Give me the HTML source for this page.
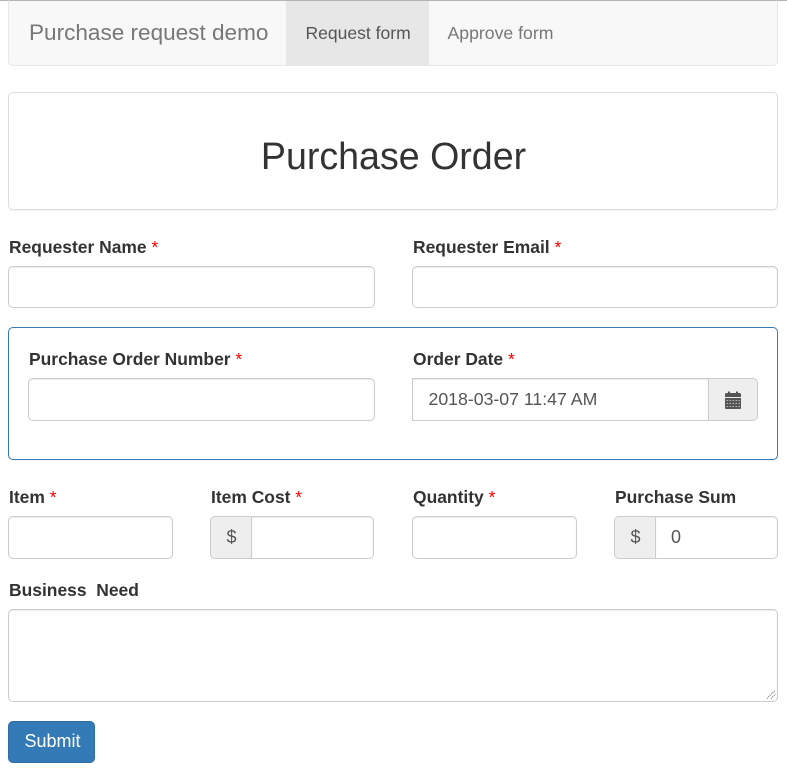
<!DOCTYPE html>
<html>
<head>
<meta charset="utf-8">
<style>
html,body{margin:0;padding:0;background:#fff}
body{position:relative;width:787px;height:769px;overflow:hidden;font-family:"Liberation Sans",Arial,sans-serif;color:#333}
.a{position:absolute;box-sizing:border-box}
.t{position:absolute;white-space:pre;line-height:20px}
.l{font-weight:bold;color:#333;font-size:17.45px}
.l b{color:#f00;font-weight:normal}
.i{position:absolute;box-sizing:border-box;border:1px solid #ccc;border-radius:5px;background:#fff;box-shadow:inset 0 1px 1px rgba(0,0,0,.075)}
.g{position:absolute;box-sizing:border-box;border:1px solid #ccc;background:#eee;color:#555;font-size:18px;text-align:center;border-radius:5px 0 0 5px;line-height:40px;padding-left:1px}
</style>
</head>
<body>
<div class="a" style="left:0;top:0;width:787px;height:1px;background:#b4b4b4"></div>

<div class="a" style="left:8px;top:0;width:770px;height:66px;background:#f8f8f8;border:1px solid #e7e7e7;border-top:1px solid #b4b4b4;border-radius:0 0 5px 5px"></div>
<div class="a" style="left:286px;top:1px;width:143px;height:64px;background:#e7e7e7"></div>
<div class="t" style="left:29px;top:23px;font-size:22.55px;color:#777">Purchase request demo</div>
<div class="t" style="left:305.5px;top:23px;font-size:17.55px;color:#555">Request form</div>
<div class="t" style="left:447.5px;top:23px;font-size:17.65px;color:#777">Approve form</div>

<div class="a" style="left:8px;top:92px;width:770px;height:118px;border:1px solid #ddd;border-radius:5px;box-shadow:0 1px 1px rgba(0,0,0,.05)"></div>
<div class="t" style="left:0;width:787px;text-align:center;top:146px;font-size:37.6px;color:#333">Purchase Order</div>

<div class="t l" style="left:9px;top:237px">Requester Name <b>*</b></div>
<div class="i" style="left:8px;top:266px;width:367px;height:42px"></div>
<div class="t l" style="left:413px;top:237px">Requester Email <b>*</b></div>
<div class="i" style="left:412px;top:266px;width:366px;height:42px"></div>

<div class="a" style="left:8px;top:327px;width:770px;height:133px;border:1px solid #337ab7;border-radius:5px;box-shadow:0 1px 1px rgba(0,0,0,.05)"></div>
<div class="t l" style="left:29px;top:349px">Purchase Order Number <b>*</b></div>
<div class="i" style="left:28px;top:378px;width:347px;height:43px"></div>
<div class="t l" style="left:413px;top:349px">Order Date <b>*</b></div>
<div class="i" style="left:412px;top:378px;width:297px;height:43px;border-radius:0"></div>
<div class="t" style="left:428.5px;top:389px;font-size:17.7px;color:#555">2018-03-07 11:47 AM</div>
<div class="a" style="left:708px;top:378px;width:50px;height:43px;background:#eee;border:1px solid #ccc;border-radius:0 5px 5px 0"></div>
<svg class="a" style="left:724px;top:390px" width="18" height="20" viewBox="0 0 18 20">
<path fill="#555" d="M1 4.500 C1 3.500 1.600 3 2.500 3 H4 V1.500 H6 V3 H12 V1.500 H14 V3 H15.500 C16.400 3 17 3.500 17 4.500 V7 H1 Z"/>
<path fill="#555" d="M1 8 H17 V18 C17 18.600 16.600 19 16 19 H2 C1.400 19 1 18.600 1 18 Z"/>
<path stroke="#bbb" stroke-width="1" stroke-dasharray="1.500 1.500" fill="none" d="M2.500 10.500 H16 M2.500 13.500 H16 M2.500 16.500 H16"/>
</svg>

<div class="t l" style="left:9px;top:487px">Item <b>*</b></div>
<div class="i" style="left:8px;top:516px;width:165px;height:43px"></div>

<div class="t l" style="left:211px;top:487px">Item Cost <b>*</b></div>
<div class="g" style="left:210px;top:516px;width:42px;height:43px">$</div>
<div class="i" style="left:251px;top:516px;width:123px;height:43px;border-radius:0 5px 5px 0"></div>

<div class="t l" style="left:413px;top:487px">Quantity <b>*</b></div>
<div class="i" style="left:412px;top:516px;width:165px;height:43px"></div>

<div class="t l" style="left:615px;top:487px">Purchase Sum</div>
<div class="g" style="left:614px;top:516px;width:42px;height:43px">$</div>
<div class="i" style="left:655px;top:516px;width:123px;height:43px;border-radius:0 5px 5px 0"></div>
<div class="t" style="left:671px;top:527px;font-size:18px;color:#555">0</div>

<div class="t l" style="left:9px;top:580px">Business  Need</div>
<div class="i" style="left:8px;top:609px;width:770px;height:93px"></div>
<svg class="a" style="left:766px;top:689px" width="11" height="11" viewBox="0 0 11 11">
<path stroke="#666" stroke-width="1" stroke-dasharray="1 1" fill="none" d="M1 9.500 L9.500 1 M5 9.500 L9.500 5"/>
</svg>

<div class="a" style="left:8px;top:721px;width:87px;height:42px;background:#337ab7;border:1px solid #2e6da4;border-radius:5px"></div>
<div class="t" style="left:9px;width:87px;text-align:center;top:731px;font-size:18px;color:#fff">Submit</div>
</body>
</html>
